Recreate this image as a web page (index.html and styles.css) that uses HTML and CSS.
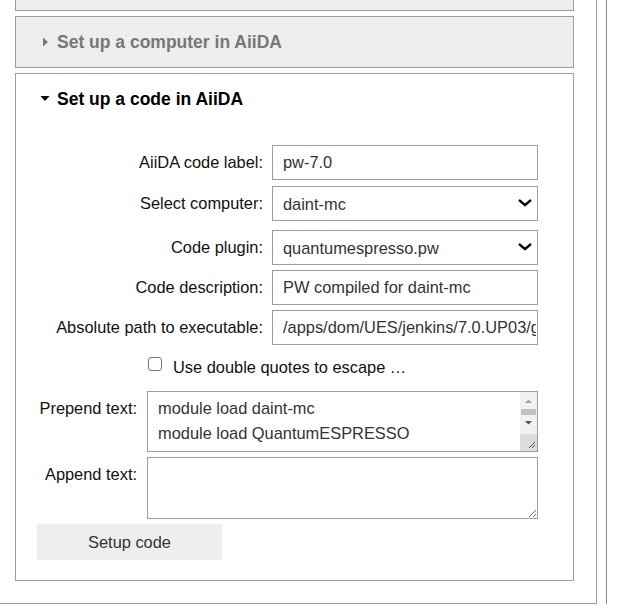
FILE: index.html
```html
<!DOCTYPE html>
<html lang="en">
<head>
<meta charset="utf-8">
<title>AiiDA code setup</title>
<link rel="stylesheet" href="styles.css">
</head>
<body>
<div class="frame">
  <div class="panel">
    <section class="acc acc-closed">
      <div class="acc-head"></div>
    </section>
    <section class="acc acc-closed">
      <div class="acc-head">
        <span class="caret"><svg width="10" height="10" viewBox="0 0 10 10"><polygon points="3,0.5 8,5 3,9.5" fill="currentColor"/></svg></span>
        <span class="acc-title">Set up a computer in AiiDA</span>
      </div>
    </section>
    <section class="acc acc-open">
      <div class="acc-head">
        <span class="caret"><svg width="10" height="10" viewBox="0 0 10 10"><polygon points="0.5,2 9.5,2 5,7" fill="currentColor"/></svg></span>
        <span class="acc-title">Set up a code in AiiDA</span>
      </div>
      <div class="acc-body">
        <div class="field">
          <label class="field-label">AiiDA code label:</label>
          <input class="text-input" type="text" value="pw-7.0">
        </div>
        <div class="field field-gap6">
          <label class="field-label">Select computer:</label>
          <div class="select-wrap">
            <select class="select"><option>daint-mc</option></select>
            <svg class="chevron" width="14" height="8" viewBox="0 0 14 8"><polyline points="1.8,1.6 7,6.2 12.2,1.6" fill="none" stroke="#000" stroke-width="2.4" stroke-linecap="round" stroke-linejoin="round"/></svg>
          </div>
        </div>
        <div class="field field-gap9">
          <label class="field-label">Code plugin:</label>
          <div class="select-wrap">
            <select class="select"><option>quantumespresso.pw</option></select>
            <svg class="chevron" width="14" height="8" viewBox="0 0 14 8"><polyline points="1.8,1.6 7,6.2 12.2,1.6" fill="none" stroke="#000" stroke-width="2.4" stroke-linecap="round" stroke-linejoin="round"/></svg>
          </div>
        </div>
        <div class="field field-gap5">
          <label class="field-label">Code description:</label>
          <input class="text-input" type="text" value="PW compiled for daint-mc">
        </div>
        <div class="field field-gap5">
          <label class="field-label">Absolute path to executable:</label>
          <input class="text-input" type="text" value="/apps/dom/UES/jenkins/7.0.UP03/gnu/easybuild/daint/mc/software/QuantumESPRESSO/7.0/bin/pw.x">
        </div>
        <div class="check-row">
          <input class="check" type="checkbox">
          <span class="check-label">Use double quotes to escape …</span>
        </div>
        <div class="area-row area-row-first">
          <label class="area-label">Prepend text:</label>
          <div class="area-wrap">
            <textarea class="area area-prepend">module load daint-mc
module load QuantumESPRESSO
</textarea>
            <svg class="fake-scroll" width="17" height="59" viewBox="0 0 17 59">
              <rect x="0" y="0" width="17" height="42" fill="#f1f1f1"/>
              <polygon points="5,11 12,11 8.5,7.5" fill="#a3a3a3"/>
              <rect x="1" y="17" width="15" height="6" fill="#c1c1c1"/>
              <polygon points="5,29 12,29 8.5,32.5" fill="#505050"/>
              <rect x="0" y="42" width="17" height="17" fill="#dcdcdc"/>
              <line x1="15" y1="50" x2="9" y2="56" stroke="#5a5a5a" stroke-width="1"/>
              <line x1="15" y1="53" x2="12" y2="56" stroke="#5a5a5a" stroke-width="1"/>
            </svg>
          </div>
        </div>
        <div class="area-row">
          <label class="area-label">Append text:</label>
          <textarea class="area area-append"></textarea>
        </div>
        <button class="btn" type="button">Setup code</button>
      </div>
    </section>
  </div>
</div>
</body>
</html>
```

FILE: styles.css
```css
html, body {
  margin: 0;
  padding: 0;
  background: #ffffff;
  overflow: hidden;
}

body {
  font-family: "Liberation Sans", Arial, sans-serif;
  font-size: 16.4px;
  color: #111;
}

.frame {
  width: 606px;
  min-height: 640px;
  border-right: 1px solid #8a8a8a;
}

.panel {
  box-sizing: border-box;
  width: 598px;
  margin-left: -1px;
  margin-top: -42px;
  border: 1px solid #a0a0a0;
  padding: 0 22px 22px 15px;
  background: #fff;
}

.acc {
  box-sizing: border-box;
  width: 559px;
  border: 1px solid #9e9e9e;
}

.acc + .acc {
  margin-top: 5px;
}

.acc-closed {
  background: #eeeeee;
}

.acc-open {
  background: #ffffff;
}

.acc-head {
  height: 50px;
  display: flex;
  align-items: center;
  padding-left: 24px;
  font-weight: bold;
  font-size: 17.5px;
}

.acc-closed .acc-head {
  color: #777777;
}

.acc-open .acc-head {
  color: #000000;
}

.caret {
  width: 10px;
  height: 10px;
  margin-right: 7px;
  display: flex;
}

.acc-body {
  padding: 21px 0 20px 21px;
}

.field {
  display: flex;
  height: 35px;
}

.field-gap6 { margin-top: 6px; }
.field-gap9 { margin-top: 9px; }
.field-gap5 { margin-top: 5px; }

.field-label {
  box-sizing: border-box;
  width: 235px;
  padding-right: 9px;
  text-align: right;
  line-height: 35px;
  white-space: nowrap;
  color: #111;
}

.text-input {
  box-sizing: border-box;
  width: 266px;
  height: 35px;
  margin: 0;
  border: 1px solid #9e9e9e;
  border-radius: 0;
  padding: 0 1px 0 10px;
  font-family: "Liberation Sans", Arial, sans-serif;
  font-size: 16.4px;
  color: #333;
  background: #fff;
  outline: none;
}

.select-wrap {
  position: relative;
  width: 266px;
  height: 35px;
}

.select {
  box-sizing: border-box;
  width: 266px;
  height: 35px;
  margin: 0;
  -webkit-appearance: none;
  appearance: none;
  border: 1px solid #9e9e9e;
  border-radius: 0;
  padding: 0 30px 0 10px;
  font-family: "Liberation Sans", Arial, sans-serif;
  font-size: 16.4px;
  color: #333;
  background: #fff;
  outline: none;
}

.chevron {
  position: absolute;
  right: 6px;
  top: 13px;
  pointer-events: none;
}

.check-row {
  display: flex;
  align-items: center;
  height: 34px;
  margin-top: 5px;
  padding-left: 111px;
}

.check {
  -webkit-appearance: none;
  appearance: none;
  box-sizing: border-box;
  width: 14px;
  height: 14px;
  margin: 0 11px 6px 0;
  border: 1px solid #767676;
  border-radius: 3px;
  background: #fff;
}

.check-label {
  color: #111;
}

.area-row {
  display: flex;
  align-items: flex-start;
  margin-top: 5px;
}

.area-row-first {
  margin-top: 7px;
}

.area-label {
  box-sizing: border-box;
  width: 110px;
  padding-right: 10px;
  text-align: right;
  line-height: 34px;
  color: #111;
}

.area-wrap {
  position: relative;
  width: 391px;
  height: 61px;
}

.area {
  display: block;
  box-sizing: border-box;
  width: 391px;
  margin: 0;
  border: 1px solid #9e9e9e;
  border-radius: 0;
  padding: 4px 10px;
  font-family: "Liberation Sans", Arial, sans-serif;
  font-size: 16.4px;
  line-height: 25px;
  color: #333;
  background: #fff;
  resize: vertical;
  outline: none;
}

.area-prepend {
  height: 61px;
  overflow: hidden;
  resize: none;
}

.fake-scroll {
  position: absolute;
  top: 1px;
  right: 1px;
  pointer-events: none;
}

.area-append {
  height: 62px;
}

.btn {
  display: block;
  box-sizing: border-box;
  width: 185px;
  height: 36px;
  margin-top: 5px;
  border: none;
  background: #eeeeee;
  font-family: "Liberation Sans", Arial, sans-serif;
  font-size: 16.4px;
  color: #333;
  padding: 0;
}
```
